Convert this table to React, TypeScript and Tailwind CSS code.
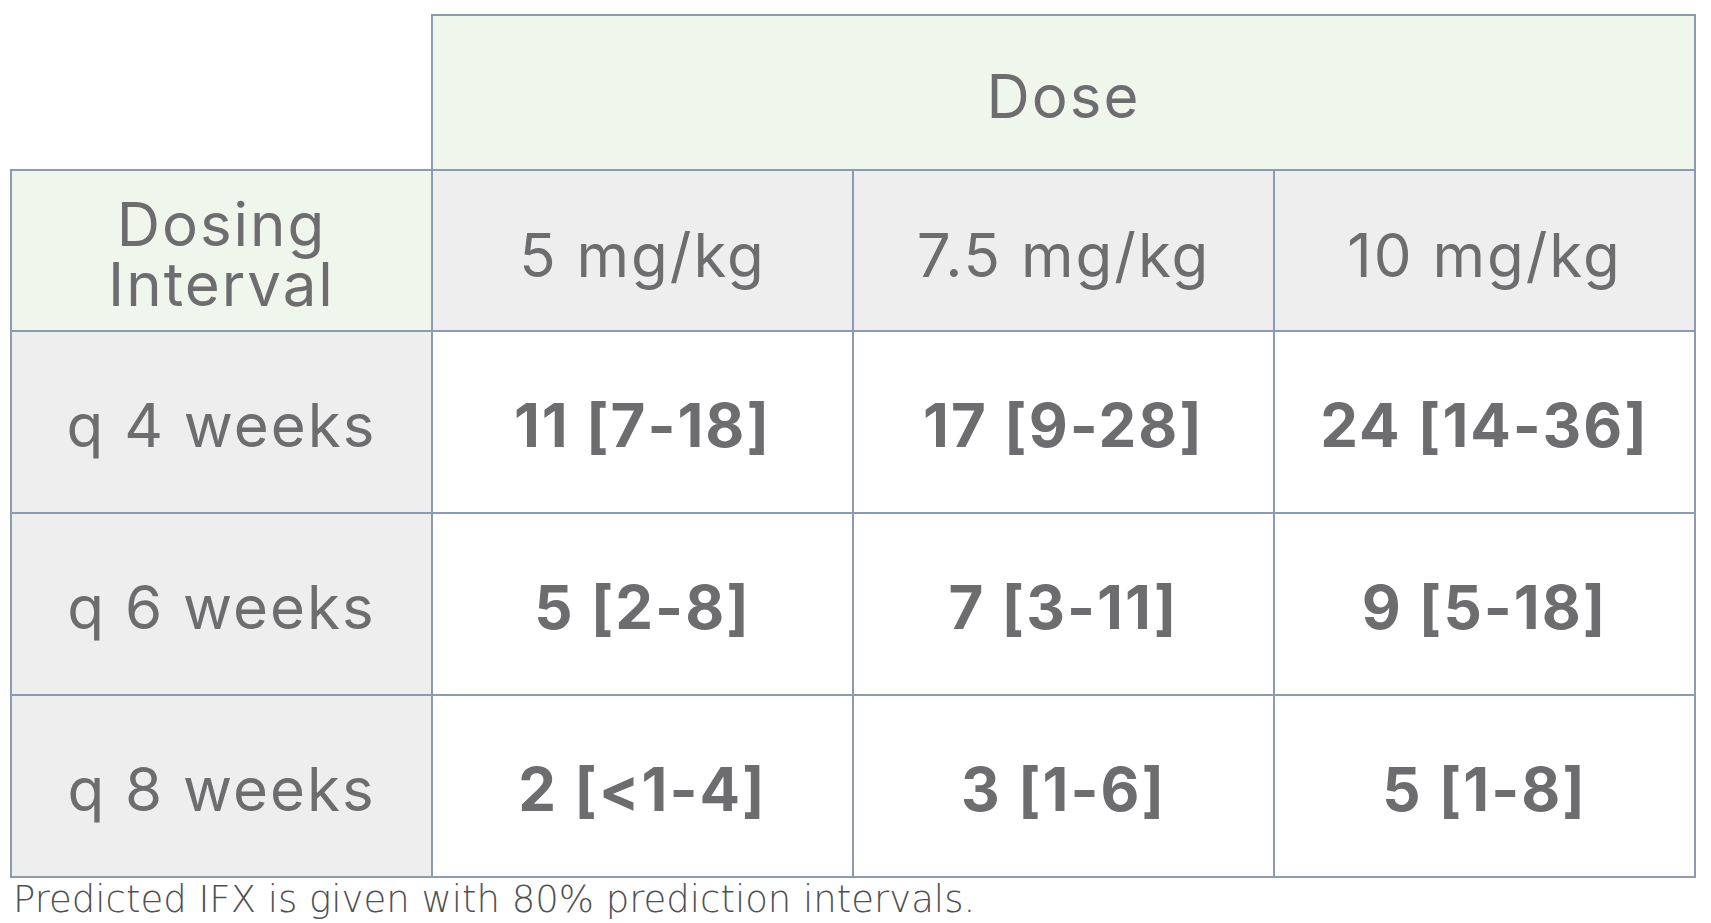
import React from "react";

const rows = [
  { label: "q 4 weeks", vals: ["11 [7-18]", "17 [9-28]", "24 [14-36]"] },
  { label: "q 6 weeks", vals: ["5 [2-8]", "7 [3-11]", "9 [5-18]"] },
  { label: "q 8 weeks", vals: ["2 [<1-4]", "3 [1-6]", "5 [1-8]"] },
];

const doses = ["5 mg/kg", "7.5 mg/kg", "10 mg/kg"];

export default function App() {
  return (
    <div
      className="w-[1711px] h-[923px] bg-white text-[#6d6d70] overflow-hidden"
      style={{ fontFamily: "Inter, 'Noto Sans', sans-serif" }}
    >
      <div className="pl-[10px] pt-[14px]">
        <table className="border-collapse table-fixed w-[1685px]">
          <colgroup>
            <col className="w-[421px]" />
            <col className="w-[421px]" />
            <col className="w-[421px]" />
            <col className="w-[421px]" />
          </colgroup>
          <tbody>
            <tr className="h-[155px]">
              <td className="p-0 border-0 bg-white"></td>
              <td
                colSpan={3}
                className="p-0 pt-[8px] border-2 border-[#8c9ab2] bg-[#eff6ec] text-center align-middle text-[60px] leading-[61px] tracking-[2px]"
              >
                Dose
              </td>
            </tr>
            <tr className="h-[161px]">
              <td className="p-0 pt-[6px] border-2 border-[#8c9ab2] bg-[#eff6ec] text-center align-middle text-[60px] leading-[60px] tracking-[2px]">
                Dosing
                <br />
                Interval
              </td>
              {doses.map((d) => (
                <td
                  key={d}
                  className="p-0 pt-[10px] border-2 border-[#8c9ab2] bg-[#eeeeee] text-center align-middle text-[60px] leading-[61px] tracking-[2px]"
                >
                  {d}
                </td>
              ))}
            </tr>
            {rows.map((r) => (
              <tr key={r.label} className="h-[182px]">
                <td className="p-0 pt-[6px] border-2 border-[#8c9ab2] bg-[#eeeeee] text-center align-middle text-[60px] leading-[61px] tracking-[2px]">
                  {r.label}
                </td>
                {r.vals.map((v) => (
                  <td
                    key={v}
                    className="p-0 pt-[6px] border-2 border-[#8c9ab2] bg-white text-center align-middle text-[60px] leading-[61px] font-bold tracking-[2px]"
                  >
                    {v}
                  </td>
                ))}
              </tr>
            ))}
          </tbody>
        </table>
        <div
          className="pl-[3px] pt-[2px] text-[37px] leading-[40px] font-extralight text-[#505053]"
          style={{ fontFamily: "'DejaVu Sans', Inter, sans-serif" }}
        >
          Predicted IFX is given with 80% prediction intervals.
        </div>
      </div>
    </div>
  );
}
